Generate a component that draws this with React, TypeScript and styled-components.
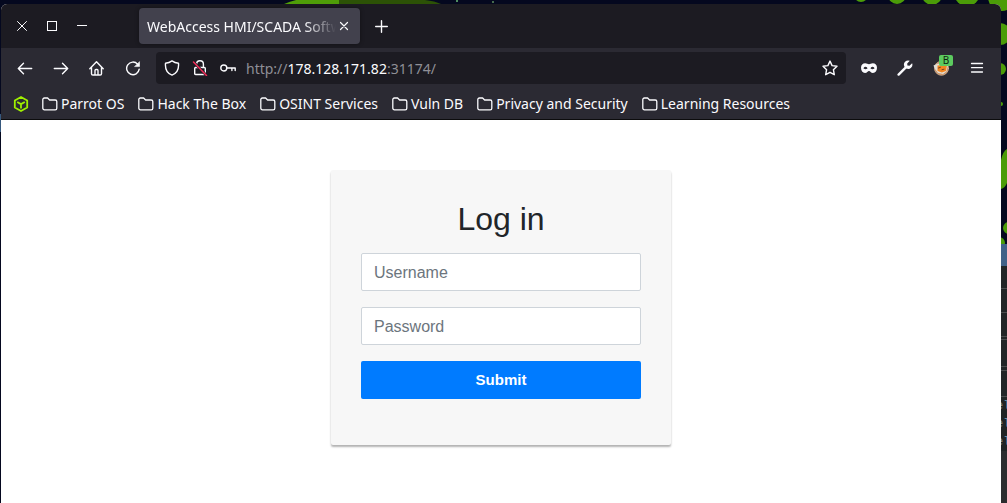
import React from 'react';
import styled, { createGlobalStyle } from 'styled-components';

const GlobalStyle = createGlobalStyle`
  *, *::before, *::after { box-sizing: border-box; }
  html, body { margin: 0; background: #04081f; }
  body { font-family: "Noto Sans", sans-serif; overflow: hidden; }
  button, input { font: inherit; }
`;

const Desktop = styled.div`
  position: relative;
  min-height: 100vh;
  padding: 4px 6px 0 1px;
  display: flex;
  overflow: hidden;
`;

const WallpaperArt = styled.svg<{ $side: 'left' | 'right' }>`
  position: absolute;
  top: 0;
  ${p => p.$side}: 0;
`;

const Terminal = styled.div`
  position: absolute;
  right: 0;
  top: 244px;
  bottom: 0;
  width: 12px;
  background: #2b2c2e;
  border-top: 22px solid #416188;
`;

const TerminalRule = styled.div<{ $gap: number }>`
  border-top: ${p => p.$gap}px solid #222527;
  height: ${p => p.$gap + 1}px;
  background: #4b4d4f;
`;

const TerminalText = styled.pre`
  margin: 0;
  padding-left: 1px;
  font: 12px/18px "Liberation Mono", monospace;
  color: #8b8a79;
  background: #202425;
  overflow: hidden;
  span { color: #668da5; }
`;

const Window = styled.main`
  position: relative;
  flex: 1;
  min-width: 0;
  display: flex;
  flex-direction: column;
  border-radius: 6px 6px 0 0;
  overflow: hidden;
  background: #fff;
`;

const TitleBar = styled.header`
  display: flex;
  align-items: center;
  height: 44px;
  padding-left: 6px;
  background: #1c1b22;
`;

const WindowControls = styled.div`
  display: flex;
  width: 132px;
`;

const IconButton = styled.button<{ $width: number }>`
  display: flex;
  align-items: center;
  justify-content: center;
  flex: none;
  width: ${p => p.$width}px;
  height: 32px;
  padding: 0;
  border: 0;
  background: none;
  color: #fbfbfe;
  position: relative;
`;

const Tab = styled.div`
  display: flex;
  align-items: center;
  width: 221px;
  height: 36px;
  padding: 0 8px;
  border-radius: 4px;
  background: #42414d;
  box-shadow: 0 0 4px rgba(0, 0, 0, 0.4);
`;

const TabTitle = styled.span`
  flex: 1;
  padding-top: 1px;
  overflow: hidden;
  white-space: nowrap;
  font-size: 14px;
  line-height: 20px;
  color: #fbfbfe;
  mask-image: linear-gradient(to left, transparent, #000 32px);
`;

const NavBar = styled.nav`
  display: flex;
  align-items: center;
  height: 40px;
  padding: 0 6px;
  background: #2b2a33;
`;

const AddressBar = styled.div`
  display: flex;
  align-items: center;
  flex: 1;
  min-width: 0;
  height: 32px;
  margin: 0 5px;
  padding-left: 2px;
  border-radius: 4px;
  background: #1c1b22;
`;

const Address = styled.div`
  flex: 1;
  padding: 1px 0 0 4px;
  font-size: 14px;
  line-height: 20px;
  color: #8f8f96;
  white-space: nowrap;
  strong { font-weight: 400; color: #fbfbfe; }
`;

const Badge = styled.span`
  position: absolute;
  top: 3px;
  right: 6px;
  width: 14px;
  height: 11px;
  border-radius: 2px;
  background: #5ccb5f;
  color: #10230f;
  font-size: 10px;
  line-height: 11px;
  text-align: center;
`;

const BookmarkBar = styled.div`
  display: flex;
  align-items: center;
  gap: 14px;
  height: 32px;
  padding-left: 12px;
  background: #2b2a33;
  border-bottom: 1px solid #0c0c0d;
`;

const Bookmark = styled.a`
  display: flex;
  align-items: center;
  gap: 3px;
  font-size: 14px;
  line-height: 20px;
  color: #fbfbfe;
  text-decoration: none;
  white-space: nowrap;
`;

const HomeBookmark = styled(Bookmark)`
  margin-right: -1px;
`;

const Page = styled.section`
  flex: 1;
  padding-top: 50px;
  font-family: "Liberation Sans", Arial, sans-serif;
`;

const LoginForm = styled.form`
  display: flex;
  flex-direction: column;
  gap: 16px;
  width: 340px;
  max-width: 100%;
  margin: 0 auto;
  padding: 30px 30px 46px;
  border-radius: 2px;
  background: #f7f7f7;
  box-shadow: 0 2px 2px rgba(0, 0, 0, 0.3);
`;

const Heading = styled.h2`
  margin: 0 0 -1px;
  font-size: 32px;
  font-weight: 400;
  line-height: 38px;
  text-align: center;
  color: #212529;
`;

const Field = styled.input`
  width: 100%;
  height: 38px;
  padding: 7px 12px 5px;
  border: 1px solid #ced4da;
  border-radius: 2px;
  background: #fff;
  color: #495057;
  font-size: 16px;
  &::placeholder { color: #6c757d; opacity: 1; }
`;

const Submit = styled.button`
  height: 38px;
  padding: 0 12px 2px;
  border: 0;
  border-radius: 2px;
  background: #007bff;
  color: #fff;
  font-size: 15px;
  font-weight: 700;
`;

type GlyphProps = { children: React.ReactNode; size?: number; width?: number; crisp?: boolean };

const Glyph = ({ children, size = 16, width = 1.4, crisp }: GlyphProps) => (
  <svg width={size} height={size} viewBox={`0 0 ${size} ${size}`} fill="none" stroke="currentColor"
    strokeWidth={width} strokeLinecap="round" strokeLinejoin="round"
    shapeRendering={crisp ? 'crispEdges' : undefined} aria-hidden="true">
    {children}
  </svg>
);

const FolderIcon = () => (
  <Glyph width={1.3}>
    <path d="M.8 12.2V3.6A1.6 1.6 0 0 1 2.4 2h3.2l2 2h5.6a1.6 1.6 0 0 1 1.6 1.6v6.6a1.6 1.6 0 0 1-1.6 1.6H2.4a1.6 1.6 0 0 1-1.6-1.6z" />
  </Glyph>
);

const folders = ['Parrot OS', 'Hack The Box', 'OSINT Services', 'Vuln DB', 'Privacy and Security', 'Learning Resources'];

export default function App() {
  return (
    <>
      <GlobalStyle />
      <Desktop>
        <WallpaperArt $side="left" width="500" height="503" aria-hidden="true">
          <path d="M284 4Q310-6 340-5v9z" fill="#4f9d08" />
          <path d="M339 0h86q10 1 16 4H339z" fill="#2c5206" />
          <circle cx="457" cy="1" r="1" fill="#69b877" />
          <circle cx="493" cy="2" r="1" fill="#5c8d5e" />
          <path d="M0 114h1v18H0z" fill="#36587d" />
        </WallpaperArt>
        <WallpaperArt $side="right" width="160" height="260" aria-hidden="true">
          <g fill="#4b9c08">
            <circle cx="14" cy="-5" r="7" /><circle cx="50" cy="-5" r="9" />
            <circle cx="85" cy="-5" r="10" /><circle cx="120" cy="-7" r="13" />
            <circle cx="155" cy="-3" r="14" /><circle cx="153" cy="34" r="11" />
            <circle cx="153" cy="69" r="6" /><circle cx="154" cy="104" r="2" />
            <path d="M154 160q2-9 6-11v34q-2 5-6 6z" />
            <circle cx="162" cy="228" r="6" /><circle cx="152" cy="243" r="6" />
          </g>
        </WallpaperArt>
        <Terminal aria-hidden="true">
          <TerminalRule $gap={22} /><TerminalRule $gap={23} /><TerminalRule $gap={23} />
          <TerminalRule $gap={2} /><TerminalRule $gap={26} /><TerminalRule $gap={3} />
          <TerminalRule $gap={25} />
          <TerminalText>e<span>l</span>{'\n'}e<span>l</span>{'\n'}e<span>l</span></TerminalText>
        </Terminal>

        <Window>
          <TitleBar>
            <WindowControls>
              <IconButton $width={30} aria-label="Close window">
                <Glyph width={1}><path d="m3.5 3.5 9 9m0-9-9 9" /></Glyph>
              </IconButton>
              <IconButton $width={30} aria-label="Maximize">
                <Glyph width={1} crisp><path d="M3.500 3.500h9v9h-9z" /></Glyph>
              </IconButton>
              <IconButton $width={30} aria-label="Minimize">
                <Glyph width={1} crisp><path d="M3.500 7.500h9" /></Glyph>
              </IconButton>
            </WindowControls>
            <Tab>
              <TabTitle>WebAccess HMI/SCADA Software</TabTitle>
              <IconButton $width={16} aria-label="Close tab">
                <Glyph width={1.2}><path d="m4.500 4.500 7 7m0-7-7 7" /></Glyph>
              </IconButton>
            </Tab>
            <IconButton $width={42} aria-label="New tab">
              <Glyph width={1.4}><path d="M8.500 2.700v11.600M2.700 8.500h11.600" /></Glyph>
            </IconButton>
          </TitleBar>

          <NavBar>
            <IconButton $width={36} aria-label="Back">
              <Glyph><path d="M1.300 8.500h13.400M6.500 3.200 1.300 8.500l5.200 5.200" /></Glyph>
            </IconButton>
            <IconButton $width={36} aria-label="Forward">
              <Glyph><path d="M14.700 8.500H1.300M9.500 3.200l5.200 5.300-5.200 5.200" /></Glyph>
            </IconButton>
            <IconButton $width={36} aria-label="Home">
              <Glyph><path d="M.8 8.700 7.500 1.700l6.700 7M2.500 7v6.700q0 1.300 1.300 1.300h7.400q1.300 0 1.300-1.300V7M6 15v-4.500q0-1 1-1h1q1 0 1 1V15" /></Glyph>
            </IconButton>
            <IconButton $width={36} aria-label="Reload">
              <Glyph><path d="M14.200 9.200A6.300 6.300 0 1 1 12.600 4.100" /><path d="M14.500 2v4.600H9.900z" fill="currentColor" strokeWidth=".6" /></Glyph>
            </IconButton>
            <AddressBar>
              <IconButton $width={28} aria-label="Tracking protection">
                <Glyph><path d="M8 .900Q10.800 2.900 14.500 3.200C15 8.800 13.200 13.300 8 15.100 2.800 13.300 1 8.800 1.500 3.200 5.200 2.900 8 .900 8 .900z" /></Glyph>
              </IconButton>
              <IconButton $width={28} aria-label="Connection not secure">
                <Glyph>
                  <path d="M4.600 7.500V4.200a3.400 3.400 0 0 1 6.800 0v3.300M3.700 7.500h8.600q1 0 1 1v5q0 1-1 1H3.700q-1 0-1-1v-5q0-1 1-1z" />
                  <path d="m2 2.500 12.500 13" stroke="#1c1b22" strokeWidth="2.600" />
                  <path d="m1.500 2 13 13.500" stroke="#f02c58" strokeWidth="1.500" />
                </Glyph>
              </IconButton>
              <IconButton $width={28} aria-label="Saved logins">
                <Glyph><circle cx="3.800" cy="8" r="3" /><path d="M6.900 8h8.300v2.500M11.900 8v2.500" /></Glyph>
              </IconButton>
              <Address>http://<strong>178.128.171.82</strong>:31174/</Address>
              <IconButton $width={32} aria-label="Bookmark this page">
                <Glyph><path d="m8 1.100 2.100 4.500 4.900.7-3.600 3.400.9 5-4.300-2.400-4.300 2.400.9-5L1 6.300l4.900-.7z" /></Glyph>
              </IconButton>
            </AddressBar>
            <IconButton $width={36} aria-label="Private mask">
              <Glyph>
                <path fill="currentColor" stroke="none" fillRule="evenodd" d="M0 7.800C0 4.900 1.700 3.300 4.200 3.300c1.700 0 2.500 1 3.800 1s2.100-1 3.800-1c2.500 0 4.200 1.600 4.200 4.500 0 3-1.600 5.100-4 5.100-2.200 0-2.700-2-4-2s-1.800 2-4 2c-2.400 0-4-2.100-4-5.100zM2.400 8.200q2.200 2.300 4.200 0Q4.400 5.400 2.400 8.200zM9.400 8.200q2 2.300 4.200 0-2-2.800-4.200 0z" />
              </Glyph>
            </IconButton>
            <IconButton $width={36} aria-label="Developer tools">
              <Glyph>
                <path d="m1.600 14.600 7-7" strokeWidth="2.400" />
                <path d="M12.800.800A4.200 4.200 0 0 0 7.500 6.700L9.400 8.600A4.200 4.200 0 0 0 15.100 3.300L12.500 5.700 10.400 5.500 10.200 3.400z" fill="currentColor" stroke="none" />
              </Glyph>
            </IconButton>
            <IconButton $width={36} aria-label="FoxyProxy">
              <Glyph>
                <circle cx="8.500" cy="8.300" r="7" fill="#c58c60" stroke="#d8b595" strokeWidth=".8" />
                <path d="M.5 5.500 5 3.500l10 2-1.500 6-3.500 2.500-5-1-3-4z" fill="#e1ddd5" stroke="none" />
                <path d="m4.500 5.500 9.500-.5-1 6-4 1.500-4.500-1.500z" fill="#f4861f" stroke="none" />
                <path d="m5.500 8 2-.7M9 9.700l2-.5" stroke="#704127" strokeWidth="1" />
              </Glyph>
              <Badge>B</Badge>
            </IconButton>
            <IconButton $width={36} aria-label="Open menu">
              <Glyph width={1.300}><path d="M2.500 3.500h11M2.500 7.700h11M2.500 12h11" /></Glyph>
            </IconButton>
          </NavBar>

          <BookmarkBar>
            <HomeBookmark href="#" aria-label="Hack The Box home">
              <svg width="16" height="16" viewBox="0 0 16 16" fill="none" stroke="#9fef00" strokeWidth="1.800" strokeLinejoin="round" aria-hidden="true">
                <path d="m8 1 6.200 3.500v7L8 15l-6.200-3.500v-7zM4.200 6 8 8.100 11.800 6M8 8.100v4.500" />
              </svg>
            </HomeBookmark>
            {folders.map(name => (
              <Bookmark href="#" key={name}><FolderIcon />{name}</Bookmark>
            ))}
          </BookmarkBar>

          <Page>
            <LoginForm onSubmit={e => e.preventDefault()}>
              <Heading>Log in</Heading>
              <Field type="text" placeholder="Username" aria-label="Username" />
              <Field type="password" placeholder="Password" aria-label="Password" />
              <Submit type="submit">Submit</Submit>
            </LoginForm>
          </Page>
        </Window>
      </Desktop>
    </>
  );
}
